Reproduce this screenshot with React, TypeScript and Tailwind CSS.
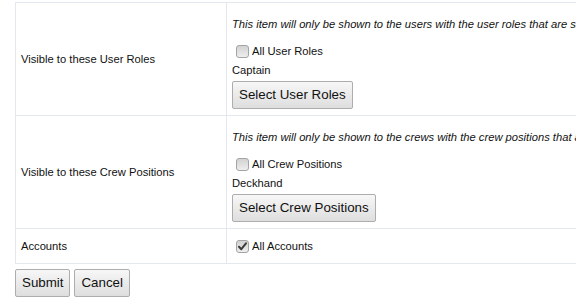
import type { ReactNode } from "react";

const font = { fontFamily: '"Liberation Sans", Arial, sans-serif' };

function Checkbox({ checked = false }: { checked?: boolean }) {
  return (
    <span className="ml-[4px] mr-[3px] flex h-[13px] w-[13px] shrink-0 items-center justify-center rounded-[3px] border border-[#a4a4a4] bg-gradient-to-b from-[#d2d2d2] to-[#eeeeee]">
      {checked && (
        <svg width="11" height="11" viewBox="0 0 11 11" aria-hidden="true">
          <path
            d="M2 5.8 L4.3 8.2 L9 2.4"
            fill="none"
            stroke="#3a3a3a"
            strokeWidth="2"
            strokeLinecap="round"
            strokeLinejoin="round"
          />
        </svg>
      )}
    </span>
  );
}

function Button({ children }: { children: ReactNode }) {
  return (
    <button
      type="button"
      className="flex h-[28px] items-center rounded-[2px] border border-[#adadad] bg-gradient-to-b from-[#f7f7f7] to-[#dedede] px-[6px] text-[13.333px] leading-none text-[#111]"
    >
      {children}
    </button>
  );
}

function CheckRow({ label, checked }: { label: string; checked?: boolean }) {
  return (
    <div className="flex h-[18px] items-center">
      <Checkbox checked={checked} />
      <span className="leading-[16px]">{label}</span>
    </div>
  );
}

function SelectRow({
  label,
  note,
  allLabel,
  selected,
  button,
}: {
  label: string;
  note: string;
  allLabel: string;
  selected: string;
  button: string;
}) {
  return (
    <div className="flex border-b border-[#e3e7ee]">
      <div className="flex w-[211px] shrink-0 items-center border-r border-[#e3e7ee] pl-[5px]">
        {label}
      </div>
      <div className="flex flex-1 flex-col items-start pl-[5px] pt-[13px] pb-[6px]">
        <p className="whitespace-nowrap italic leading-[16px]">{note}</p>
        <div className="mt-[10px]">
          <CheckRow label={allLabel} />
        </div>
        <p className="mt-[2px] leading-[16px]">{selected}</p>
        <div className="mt-[3px]">
          <Button>{button}</Button>
        </div>
      </div>
    </div>
  );
}

export default function App() {
  return (
    <div
      className="h-[303px] w-full overflow-hidden bg-white pl-[15px] pt-[2px] text-[11.2px] text-[#111]"
      style={font}
    >
      <div className="w-[760px] border-l border-t border-[#e3e7ee]">
        <SelectRow
          label="Visible to these User Roles"
          note="This item will only be shown to the users with the user roles that are selected below. Leave it empty to show it to everyone."
          allLabel="All User Roles"
          selected="Captain"
          button="Select User Roles"
        />
        <SelectRow
          label="Visible to these Crew Positions"
          note="This item will only be shown to the crews with the crew positions that are selected below."
          allLabel="All Crew Positions"
          selected="Deckhand"
          button="Select Crew Positions"
        />
        <div className="flex h-[35px] border-b border-[#e3e7ee]">
          <div className="flex w-[211px] shrink-0 items-center border-r border-[#e3e7ee] pl-[5px]">
            Accounts
          </div>
          <div className="flex flex-1 items-center pl-[5px]">
            <CheckRow label="All Accounts" checked />
          </div>
        </div>
      </div>
      <div className="mt-[5px] flex gap-[4px]">
        <Button>Submit</Button>
        <Button>Cancel</Button>
      </div>
    </div>
  );
}
